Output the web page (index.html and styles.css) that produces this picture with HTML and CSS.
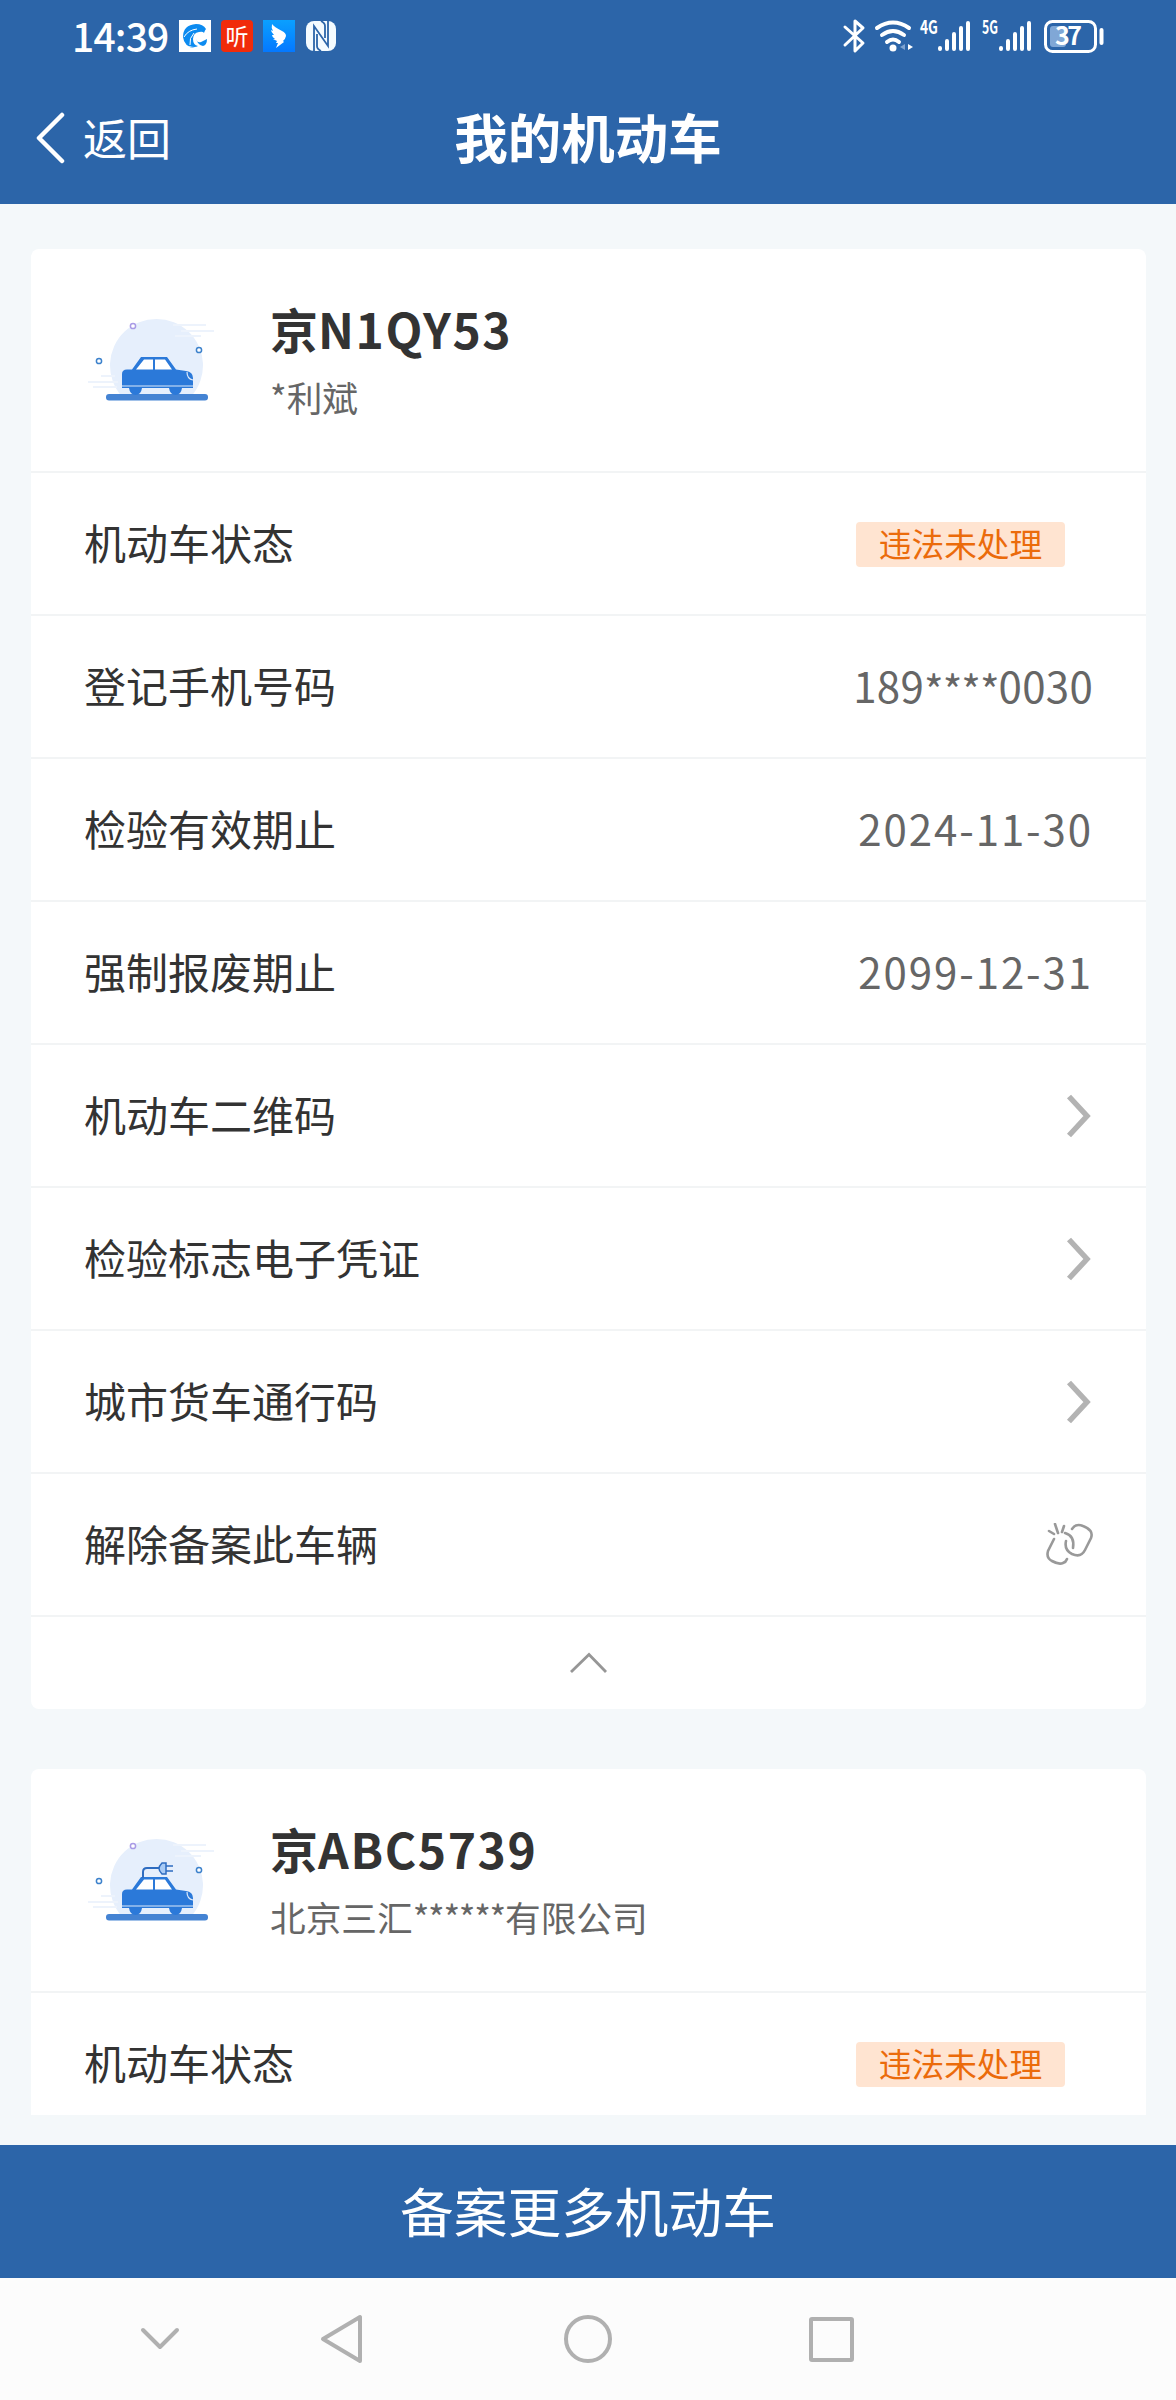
FILE: index.html
```html
<!DOCTYPE html>
<html lang="zh-CN">
<head>
    <meta charset="UTF-8">
    <meta name="viewport" content="width=device-width, initial-scale=1.0">
    <title>我的机动车</title>
    <link rel="stylesheet" href="styles.css">
</head>
<body>

<svg width="0" height="0" class="defs">
    <symbol id="arrow" viewBox="0 0 28 46">
        <path d="M4 3.500 L22 23 L4 42.500" fill="none" stroke="#b3b3b3" stroke-width="5.500"/>
    </symbol>
    <symbol id="scene" viewBox="0 0 130 100">
        <path d="M36.500 84A46.500 46.500 0 1 1 106.500 84z" fill="#e6effc"/>
        <path d="M88 13h33M96 19h33M90 24h26M3 70h30M8 75h24M16 64h14" stroke="#edf3fc" stroke-width="2"/>
        <rect x="21" y="82" width="102" height="6.500" rx="3" fill="#4483d3"/>
        <g fill="#fff" stroke-width="1.500">
            <circle cx="48" cy="14" r="2.600" stroke="#a99be6"/>
            <circle cx="114" cy="38" r="2.600" stroke="#3d82cc"/>
            <circle cx="14" cy="49" r="2.600" stroke="#3d82cc"/>
        </g>
        <path d="M37 73V62q0-4.500 5-4.500h5l9-12.500h26l9 12.500 10 1.500q7 1 7 7v7z" fill="#2b79d9"/>
        <path d="M51 57.500l8-10h9v10zM70 47.500h10l7 10H70z" fill="#fff"/>
        <path d="M37 72h71v4H37z" fill="#2b79d9"/>
        <path d="M37 74h71" stroke="#dce9fa" stroke-width="1.200"/>
        <path d="M102 60q0 7 6 8" fill="none" stroke="#dce9fa" stroke-width="1.200"/>
        <path d="M44 76h13q-1 7-6.500 7T44 76zM84 76h13q-1 7-6.500 7T84 76z" fill="#2b79d9"/>
    </symbol>
</svg>

<div class="status-bar">
    <div class="status-left">
        <span class="clock">14:39</span>
        <svg width="32" height="32" viewBox="0 0 32 32">
            <rect width="32" height="32" fill="#fff"/>
            <path d="M27 9Q24 4 17 4 4 5 4 17q1 10 12 11-5 0-6-2 6 2 9 0-5-1-5-7 0-6 6-7 4-1 5 1 1-3 2-4z" fill="#0c8bf0"/>
            <path d="M18 9Q9 10 5 17M15 13q-5 5-4 12" fill="none" stroke="#fff" stroke-width="1"/>
            <path d="M17 19q1 4 5 3l6-3q0 6-4 7-5-1-7-7z" fill="#0c8bf0"/>
        </svg>
        <div class="app-icon listen">听</div>
        <svg width="32" height="32" viewBox="0 0 32 32">
            <linearGradient id="wing" x2="0" y2="1"><stop stop-color="#0aa0ff"/><stop offset="1" stop-color="#0478ff"/></linearGradient>
            <rect width="32" height="32" fill="url(#wing)"/>
            <path d="M9 4q2 3 10 7 4 2 4 5-1 4-3 5l1 1-8 6 2-5h-2l1-2-4-2h2q-3-2-3-4h2Q8 12 8 10l2 1Q8 8 9 4z" fill="#fff"/>
        </svg>
        <svg width="32" height="32" viewBox="0 0 32 32">
            <rect x="1" y="1" width="30" height="30" rx="8" fill="#f4fbff"/>
            <path d="M9 31V6l14 20V1" fill="none" stroke="#2c65a9" stroke-width="1.800"/>
            <path d="M12 14v12q0 3 4 5M20 18V6q0-3-4-5" fill="none" stroke="#2c65a9" stroke-width="1.800"/>
        </svg>
    </div>
    <svg class="signals" width="262" height="72" viewBox="842 0 262 72">
        <g fill="none" stroke="#fff" stroke-width="3" stroke-linecap="round" stroke-linejoin="round">
            <path d="M845 27l18 16-8 8V21l8 7-18 17"/>
            <g stroke-width="4">
                <path d="M877 28q16-11 32 0M882 35q11-8 22 0M887 42q6-5 12 0"/>
            </g>
            <path d="M940 48v1M947 41v8M954 34v15M961 28v21M968 23v26M1001 48v1M1008 41v8M1015 34v15M1022 28v21M1029 23v26" stroke-width="4"/>
            <rect x="1045.500" y="21.500" width="50" height="30" rx="7" stroke-width="3"/>
            <path d="M1101.500 30v13" stroke-width="4"/>
        </g>
        <circle cx="893" cy="48" r="3.500" fill="#fff"/>
        <path d="M905 44l-5 3 5 3z" fill="#7fa3d0"/>
        <path d="M908 44l5 3-5 3z" fill="#fff"/>
        <rect x="1050" y="26" width="16" height="21" rx="3" fill="#80a7d6"/>
        <text x="920" y="34" class="net" textLength="18" lengthAdjust="spacingAndGlyphs">4G</text>
        <text x="982" y="34" class="net" textLength="16" lengthAdjust="spacingAndGlyphs">5G</text>
        <text x="1055" y="45" class="level" textLength="27">37</text>
    </svg>
</div>

<div class="nav-bar">
    <div class="back">
        <svg width="30" height="52" viewBox="0 0 30 52"><path d="M27 3L4 26l23 23" fill="none" stroke="#fff" stroke-width="4.500" stroke-linecap="round" stroke-linejoin="round"/></svg>
        <span>返回</span>
    </div>
    <h1>我的机动车</h1>
</div>

<div class="content">
    <div class="card">
        <div class="card-head">
            <svg class="car" width="130" height="100"><use href="#scene"/></svg>
            <div class="info">
                <h2>京<span class="plate">N1QY53</span></h2>
                <p>*利斌</p>
            </div>
        </div>
        <div class="row"><span>机动车状态</span><span class="badge">违法未处理</span></div>
        <div class="row"><span>登记手机号码</span><span class="value phone">189<span class="mask">****</span>0030</span></div>
        <div class="row"><span>检验有效期止</span><span class="value date">2024-11-30</span></div>
        <div class="row"><span>强制报废期止</span><span class="value date">2099-12-31</span></div>
        <div class="row"><span>机动车二维码</span><svg width="28" height="46"><use href="#arrow"/></svg></div>
        <div class="row"><span>检验标志电子凭证</span><svg width="28" height="46"><use href="#arrow"/></svg></div>
        <div class="row"><span>城市货车通行码</span><svg width="28" height="46"><use href="#arrow"/></svg></div>
        <div class="row">
            <span>解除备案此车辆</span>
            <svg class="unlink" width="48" height="44" viewBox="0 0 48 44">
                <g fill="none" stroke="#999" stroke-width="2.600" stroke-linecap="round">
                    <path d="M9 16L3 28q-2 7 4 10 7 4 11 2 3-1 4-4"/>
                    <path d="M20 10q10 3 8 15"/>
                    <path d="M27 6q4-6 11-3 11 4 8 12l-6 12q-4 8-13 4-8-4-6-13"/>
                    <path d="M4 8l5 3M10 1l3 9M19 3l-2 6"/>
                </g>
            </svg>
        </div>
        <div class="collapse">
            <svg width="38" height="22" viewBox="0 0 38 22"><path d="M1 20L19 2.500l17 17.500" fill="none" stroke="#969696" stroke-width="2.800"/></svg>
        </div>
    </div>

    <div class="card">
        <div class="card-head">
            <svg class="car" width="130" height="100" viewBox="0 0 130 100">
                <use href="#scene"/>
                <path d="M58 46v-6q0-4 4-4h12" fill="none" stroke="#2e6cc0" stroke-width="2"/>
                <path d="M81 31h-4q-3 3-3 5.500t3 5.500h4zM81 34h7M81 39h7" fill="#a9cbf5" stroke="#2e6cc0" stroke-width="1.500"/>
            </svg>
            <div class="info">
                <h2>京<span class="plate">ABC5739</span></h2>
                <p>北京三汇<span class="mask-sm">******</span>有限公司</p>
            </div>
        </div>
        <div class="row"><span>机动车状态</span><span class="badge">违法未处理</span></div>
    </div>
</div>

<button class="add-btn" type="button">备案更多机动车</button>

<div class="system-nav">
    <svg width="1176" height="122" viewBox="0 0 1176 122">
        <g fill="none" stroke="#b0b0b0" stroke-width="4" stroke-linecap="round" stroke-linejoin="round">
            <path d="M143 52l17 17 17-17"/>
            <path d="M360 39v44l-37-22z"/>
            <circle cx="588" cy="61" r="22"/>
            <rect x="811" y="41" width="41" height="41" rx="1"/>
        </g>
    </svg>
</div>

</body>
</html>
```
FILE: styles.css
```css
* {
    box-sizing: border-box;
}
body {
    margin: 0;
    width: 1176px;
    height: 2400px;
    display: flex;
    flex-direction: column;
    overflow: hidden;
    background-color: #f4f8fa;
    color: #333;
    font-family: "Noto Sans CJK SC", sans-serif;
}
h1, h2, p {
    margin: 0;
}
svg {
    display: block;
    flex-shrink: 0;
}
.defs {
    position: absolute;
}
.status-bar {
    height: 72px;
    flex-shrink: 0;
    display: flex;
    justify-content: space-between;
    padding: 0 72px 0 72px;
    background: #2c65a9;
    color: #fff;
}
.status-left {
    display: flex;
    align-items: center;
    gap: 10px;
}
.clock {
    width: 97px;
    padding-bottom: 2px;
    font-size: 39px;
    font-weight: 500;
    letter-spacing: -0.8px;
    line-height: 70px;
}
.app-icon {
    width: 32px;
    height: 32px;
    border-radius: 4px;
    text-align: center;
    font-size: 23px;
    line-height: 31px;
}
.listen {
    background: #f12b0a;
}
.net {
    font-size: 19px;
    font-weight: 700;
    fill: #fff;
}
.level {
    font-size: 25px;
    font-weight: 700;
    fill: #fff;
}
.nav-bar {
    height: 132px;
    flex-shrink: 0;
    display: grid;
    grid-template-columns: 300px 1fr 300px;
    align-items: center;
    background: #2c65a9;
    color: #fff;
}
.back {
    display: flex;
    align-items: center;
    gap: 18px;
    padding-left: 35px;
    font-size: 44px;
    line-height: 128px;
}
.back span {
    padding-bottom: 3px;
}
.nav-bar h1 {
    padding-bottom: 4px;
    text-align: center;
    font-size: 53.5px;
    line-height: 128px;
}
.content {
    height: 1911px;
    flex-shrink: 0;
    overflow: hidden;
    padding: 45px 30px 0 31px;
}
.card {
    margin-bottom: 60px;
    background: #fff;
    border-radius: 8px;
    overflow: hidden;
}
.card-head {
    height: 224px;
    display: flex;
    align-items: flex-start;
    padding: 63px 54px 0;
    border-bottom: 2px solid #f2f4f5;
}
.info {
    margin-top: -8px;
    margin-left: 55px;
}
.info h2 {
    font-size: 48px;
    line-height: 48px;
}
.plate {
    letter-spacing: 1.6px;
}
.info p {
    margin-top: 27px;
    font-size: 35.7px;
    line-height: 36px;
    color: #666;
}
.mask-sm {
    letter-spacing: -1.3px;
}
.row {
    height: 143px;
    display: flex;
    align-items: center;
    justify-content: space-between;
    padding: 0 53px;
    border-bottom: 2px solid #f2f4f5;
    font-size: 42px;
}
.row > span {
    padding-bottom: 4px;
    line-height: 60px;
}
.value {
    color: #666;
}
.phone {
    letter-spacing: 0.3px;
}
.mask {
    letter-spacing: -1px;
    line-height: 1;
    vertical-align: -4px;
}
.date {
    letter-spacing: 1.9px;
}
.row > .badge {
    width: 209px;
    height: 45px;
    margin: 2px 28px 0 0;
    padding: 0;
    border-radius: 4px;
    background: #ffe4d1;
    color: #eb6b0b;
    text-align: center;
    font-size: 32.7px;
    line-height: 41px;
}
.collapse {
    height: 92px;
    display: flex;
    justify-content: center;
    padding-top: 35px;
}
.add-btn {
    height: 133px;
    flex-shrink: 0;
    margin-top: 30px;
    padding: 0 0 4px;
    border: 0;
    background: #2c65a9;
    color: #fff;
    font-family: inherit;
    font-size: 53.7px;
}
.system-nav {
    flex: 1;
    background: #fcfcfc;
}
```
